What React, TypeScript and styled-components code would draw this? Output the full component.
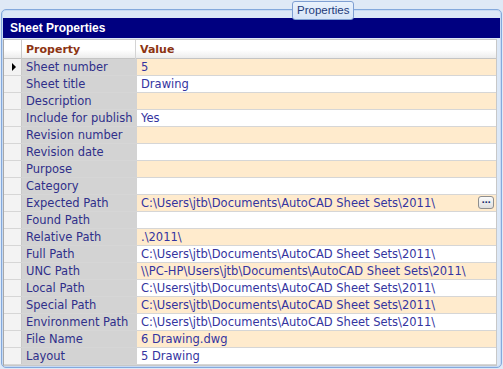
import React from "react";
import styled, { createGlobalStyle } from "styled-components";

const GlobalStyle = createGlobalStyle`
  html, body {
    margin: 0;
    padding: 0;
    background: #dfe9f6;
  }
  body {
    width: 503px;
    height: 369px;
    overflow: hidden;
    font-family: "DejaVu Sans", Verdana, sans-serif;
  }
`;

const Page = styled.div`
  width: 503px;
  height: 369px;
  padding-top: 9px;
  box-sizing: border-box;
`;

const GroupBox = styled.div`
  position: relative;
  margin: 0 1px;
  height: 359px;
  box-sizing: border-box;
  border: 1px solid #84a9dc;
  border-radius: 5px;
  background: #dce8f7;
  padding: 8px 1px 1px 1px;
  display: flex;
  flex-direction: column;
  box-shadow: inset 0 0 0 1px #c7daf3;
`;

const TabLabel = styled.div`
  position: absolute;
  top: -9px;
  left: 290px;
  height: 17px;
  padding: 0 4px;
  border: 1px solid #7f9fd2;
  border-radius: 3px;
  background: linear-gradient(#eaf2fc, #d6e4f7);
  color: #1d3a7a;
  font-family: "Liberation Sans", Arial, sans-serif;
  font-size: 11.5px;
  line-height: 17px;
`;

const TitleBar = styled.div`
  height: 20px;
  background: #000080;
  color: #ffffff;
  font-family: "Liberation Sans", Arial, sans-serif;
  font-weight: bold;
  font-size: 12px;
  line-height: 21px;
  padding-left: 7px;
`;

const Grid = styled.div`
  margin: 1px 3px 0 0;
  border: 1px solid #c8c8c8;
  border-left-color: #a8a8a8;
  background: #ffffff;
  flex: 1;
  display: flex;
  flex-direction: column;
`;

const Row = styled.div<{ $header?: boolean }>`
  display: grid;
  grid-template-columns: 18px 114px 1fr;
  height: ${(p) => (p.$header ? "19px" : "17px")};
  box-sizing: border-box;
  border-bottom: 1px solid ${(p) => (p.$header ? "#c4c4c4" : "#d6d6d6")};
  background: ${(p) =>
    p.$header ? "linear-gradient(#ffffff, #ffffff 55%, #ececec)" : "transparent"};
  font-size: 11.5px;
`;

const Selector = styled.div<{ $header?: boolean }>`
  position: relative;
  border-right: 1px solid #c9c9c9;
  background: ${(p) => (p.$header ? "transparent" : "#f3f3f3")};
`;

const Arrow = styled.span`
  position: absolute;
  left: 8px;
  top: 4px;
  width: 0;
  height: 0;
  border-top: 4px solid transparent;
  border-bottom: 4px solid transparent;
  border-left: 4px solid #000000;
`;

const HeadCell = styled.div`
  padding-left: 4px;
  color: #8c3412;
  font-weight: bold;
  font-size: 11px;
  line-height: 19px;
  border-right: 1px solid #d4d4d4;
  &:last-child {
    border-right: none;
  }
`;

const NameCell = styled.div`
  background: #d3d3d3;
  color: #2f2f8a;
  padding-left: 4px;
  line-height: 16px;
  white-space: nowrap;
  overflow: hidden;
`;

const ValueCell = styled.div<{ $alt: boolean }>`
  position: relative;
  background: ${(p) => (p.$alt ? "#ffebcd" : "#ffffff")};
  color: #3434a0;
  padding-left: 4px;
  line-height: 16px;
  white-space: nowrap;
  overflow: hidden;
  border-left: 1px solid #d3d3d3;
`;

const EllipsisButton = styled.span`
  position: absolute;
  right: 2px;
  top: 1px;
  width: 16px;
  height: 13px;
  box-sizing: border-box;
  border: 1px solid #8e8e8e;
  border-radius: 3px;
  background: linear-gradient(#fbfbfb, #dedede);
  color: #1c2f6e;
  font-size: 9px;
  font-weight: bold;
  line-height: 7px;
  text-align: center;
  letter-spacing: -0.5px;
`;

const rows: [string, string][] = [
  ["Sheet number", "5"],
  ["Sheet title", "Drawing"],
  ["Description", ""],
  ["Include for publish", "Yes"],
  ["Revision number", ""],
  ["Revision date", ""],
  ["Purpose", ""],
  ["Category", ""],
  ["Expected Path", "C:\\Users\\jtb\\Documents\\AutoCAD Sheet Sets\\2011\\"],
  ["Found Path", ""],
  ["Relative Path", ".\\2011\\"],
  ["Full Path", "C:\\Users\\jtb\\Documents\\AutoCAD Sheet Sets\\2011\\"],
  ["UNC Path", "\\\\PC-HP\\Users\\jtb\\Documents\\AutoCAD Sheet Sets\\2011\\"],
  ["Local Path", "C:\\Users\\jtb\\Documents\\AutoCAD Sheet Sets\\2011\\"],
  ["Special Path", "C:\\Users\\jtb\\Documents\\AutoCAD Sheet Sets\\2011\\"],
  ["Environment Path", "C:\\Users\\jtb\\Documents\\AutoCAD Sheet Sets\\2011\\"],
  ["File Name", "6 Drawing.dwg"],
  ["Layout", "5 Drawing"],
];

const App = (): JSX.Element => (
  <Page>
    <GlobalStyle />
    <GroupBox>
      <TabLabel>Properties</TabLabel>
      <TitleBar>Sheet Properties</TitleBar>
      <Grid>
        <Row $header>
          <Selector $header />
          <HeadCell>Property</HeadCell>
          <HeadCell>Value</HeadCell>
        </Row>
        {rows.map(([name, value], i) => (
          <Row key={name}>
            <Selector>{i === 0 && <Arrow />}</Selector>
            <NameCell>{name}</NameCell>
            <ValueCell $alt={i % 2 === 0}>
              {value}
              {name === "Expected Path" && <EllipsisButton>...</EllipsisButton>}
            </ValueCell>
          </Row>
        ))}
      </Grid>
    </GroupBox>
  </Page>
);

export default App;
